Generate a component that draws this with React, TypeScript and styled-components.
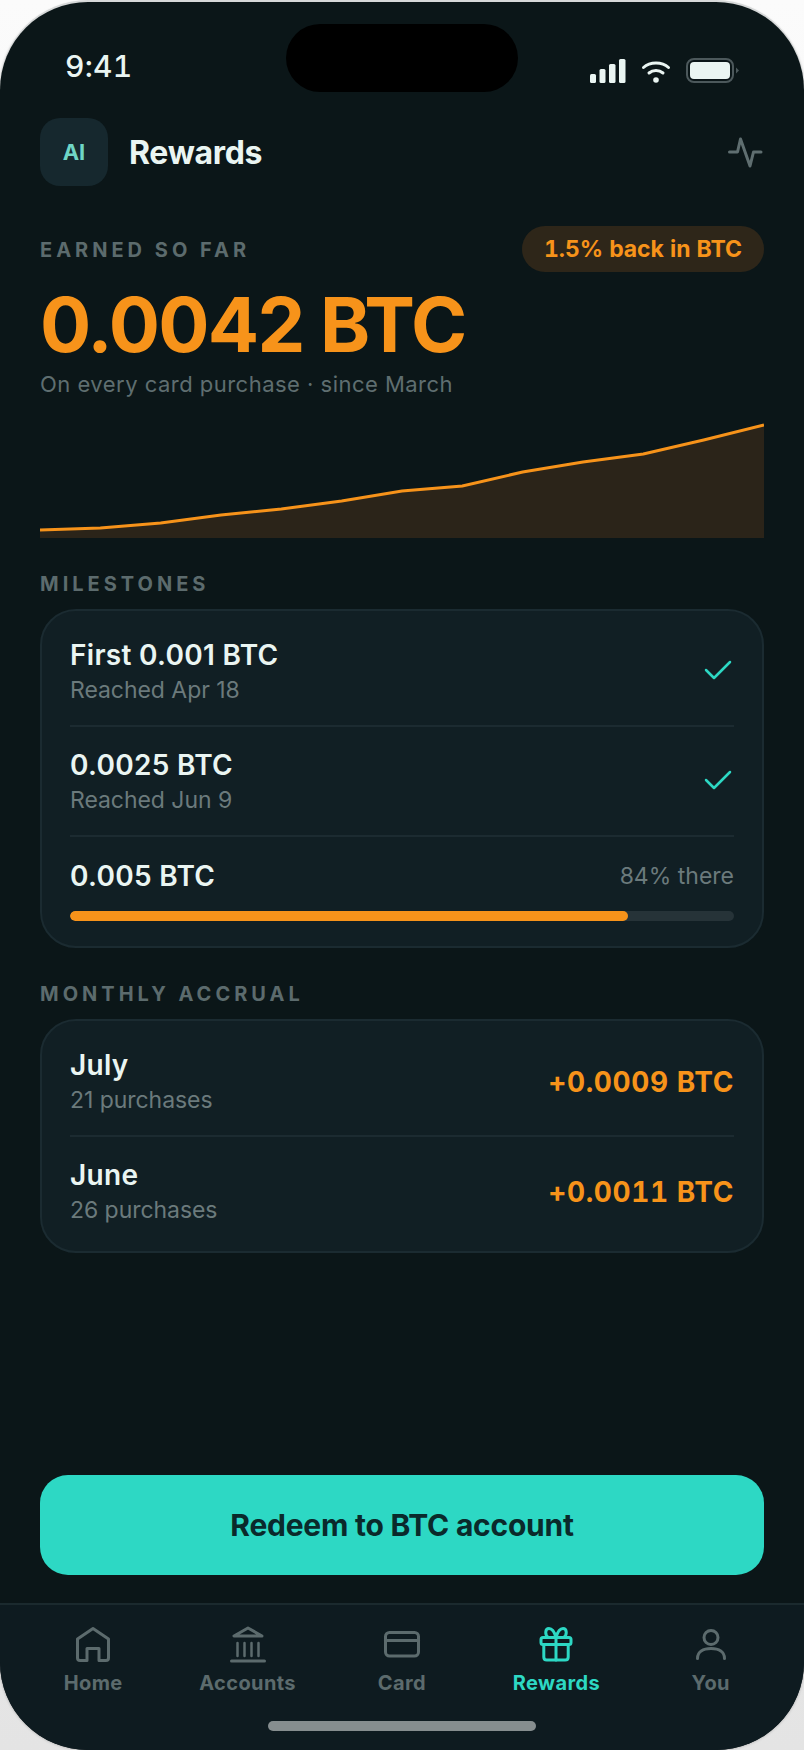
import styled, { createGlobalStyle } from "styled-components";

const ORANGE = "#f7931a";
const TEAL = "#2dd8c4";

const GlobalStyle = createGlobalStyle`
  html, body { margin: 0; padding: 0; }
  body {
    width: 804px;
    height: 1750px;
    overflow: hidden;
    background: linear-gradient(#fbfbfb, #e4e4e4);
    font-family: Inter, "Liberation Sans", sans-serif;
  }
`;

const Phone = styled.div`
  position: relative;
  margin-top: 2px;
  width: 804px;
  height: 1748px;
  display: flex;
  flex-direction: column;
  overflow: hidden;
  border-radius: 88px;
  background: #0b1618;
  box-shadow: 0 -2px 0 0 #d6d8d8, 0 0 3px rgba(0, 0, 0, 0.3);
  color: #eaf5f2;
`;

const Island = styled.div`
  position: absolute;
  top: 22px;
  left: 286px;
  width: 232px;
  height: 68px;
  border-radius: 34px;
  background: #000;
`;

const StatusBar = styled.div`
  height: 116px;
  flex: none;
  box-sizing: border-box;
  padding: 46px 64px 0 65px;
  display: flex;
  justify-content: space-between;
  align-items: flex-start;
`;

const Clock = styled.span`
  font-size: 30px;
  line-height: 36px;
  font-weight: 500;
  letter-spacing: 0.3px;
  font-variant-numeric: tabular-nums;
`;

const StatusIcons = styled.div`
  display: flex;
  align-items: center;
  gap: 15px;
  margin-top: 10px;
`;

const Content = styled.div`
  flex: 1;
  display: flex;
  flex-direction: column;
  padding: 0 40px;
`;

const Header = styled.div`
  display: flex;
  align-items: center;
  gap: 21px;
  height: 68px;
`;

const Badge = styled.div`
  width: 68px;
  height: 68px;
  border-radius: 20px;
  background: #16282e;
  color: #6fd6c6;
  display: flex;
  align-items: center;
  justify-content: center;
  font-size: 22px;
  font-weight: 700;
`;

const Title = styled.h1`
  flex: 1;
  margin: 0;
  font-size: 32px;
  font-weight: 700;
  letter-spacing: -0.3px;
`;

const HeroTop = styled.div`
  display: flex;
  align-items: center;
  justify-content: space-between;
  margin-top: 40px;
`;

const SectionLabel = styled.div`
  font-size: 20px;
  line-height: 24px;
  font-weight: 700;
  letter-spacing: 4px;
  color: #5c6b6d;
`;

const HeroLabel = styled(SectionLabel)`
  padding-top: 2px;
`;

const Pill = styled.div`
  height: 46px;
  padding: 0 22px;
  border-radius: 23px;
  background: #2e2619;
  color: ${ORANGE};
  font-size: 23px;
  font-weight: 700;
  font-variant-numeric: tabular-nums;
  letter-spacing: -0.05px;
  display: flex;
  align-items: center;
`;

const Amount = styled.div`
  margin-top: 12px;
  font-size: 76px;
  line-height: 80px;
  font-weight: 700;
  letter-spacing: -1.7px;
  color: ${ORANGE};
`;

const Sub = styled.div`
  margin-top: 5px;
  font-size: 22px;
  line-height: 30px;
  color: #5f6e70;
  letter-spacing: 0.48px;
`;

const Chart = styled.svg`
  display: block;
  margin-top: 23px;
  width: 724px;
  height: 116px;
  flex: none;
`;

const BlockLabel = styled(SectionLabel)`
  margin-top: 34px;
  margin-bottom: 13px;
`;

const Card = styled.div`
  border: 2px solid #1b2b31;
  border-radius: 36px;
  background: #111f24;
  padding: 6px 28px;
`;

const Row = styled.div<{ $last?: boolean }>`
  display: flex;
  align-items: center;
  justify-content: space-between;
  height: 108px;
  box-sizing: content-box;
  border-bottom: ${({ $last }) => ($last ? "none" : "2px solid #1c2b31")};
`;

const RowText = styled.div`
  display: flex;
  flex-direction: column;
  gap: 3px;
  padding-top: 1px;
`;

const RowTitle = styled.div`
  font-size: 28px;
  line-height: 34px;
  font-weight: 600;
  letter-spacing: 0.3px;
`;

const RowSub = styled.div`
  font-size: 23px;
  line-height: 30px;
  color: #6b7a7c;
  letter-spacing: -0.05px;
`;

const ProgressRow = styled.div`
  padding: 22px 0 19px;
`;

const ProgressHead = styled.div`
  display: flex;
  align-items: center;
  justify-content: space-between;
`;

const ProgressNote = styled.div`
  font-size: 23px;
  color: #6b7a7c;
`;

const Track = styled.div`
  margin-top: 18px;
  height: 10px;
  border-radius: 5px;
  background: #263338;
  overflow: hidden;
`;

const Fill = styled.div`
  height: 100%;
  border-radius: 5px;
  background: ${ORANGE};
`;

const Value = styled.div`
  padding-top: 2px;
  font-size: 28px;
  font-weight: 700;
  font-variant-numeric: tabular-nums;
  letter-spacing: 0.6px;
  color: ${ORANGE};
`;

const Redeem = styled.button`
  margin-top: auto;
  margin-bottom: 28px;
  width: 724px;
  height: 100px;
  flex: none;
  border: none;
  border-radius: 28px;
  background: ${TEAL};
  color: #0a2a2b;
  font-family: inherit;
  font-size: 30px;
  font-weight: 700;
  letter-spacing: -0.25px;
`;

const TabBar = styled.div`
  position: relative;
  flex: none;
  height: 147px;
  box-sizing: border-box;
  border-top: 2px solid #1b2a2e;
  background: #0e1b20;
  display: grid;
  grid-template-columns: repeat(5, 1fr);
  padding: 20px 16px 0;
`;

const Tab = styled.div<{ $active?: boolean }>`
  display: flex;
  flex-direction: column;
  align-items: center;
  gap: 6px;
  font-size: 20px;
  line-height: 24px;
  font-weight: 700;
  letter-spacing: 0.4px;
  color: ${({ $active }) => ($active ? TEAL : "#5c6b6d")};
`;

const TabIcon = styled.svg`
  display: block;
  width: 40px;
  height: 40px;
  fill: none;
  stroke: currentColor;
  stroke-width: 3;
  stroke-linecap: round;
  stroke-linejoin: round;
`;

const HomeBar = styled.div`
  position: absolute;
  left: 268px;
  bottom: 19px;
  width: 268px;
  height: 10px;
  border-radius: 5px;
  background: #868e8f;
`;

const CheckSvg = styled.svg`
  margin-right: 2px;
`;

const SignalIcon = () => (
  <svg width="36" height="24" viewBox="0 0 36 24" fill="#eaf5f2">
    <rect x="0" y="15" width="6" height="9" rx="1.5" />
    <rect x="9.5" y="10" width="6" height="14" rx="1.5" />
    <rect x="19" y="5" width="6.5" height="19" rx="1.5" />
    <rect x="29" y="0" width="6.5" height="24" rx="1.5" />
  </svg>
);

const WifiIcon = () => (
  <svg width="30" height="24" viewBox="0 0 30 24" fill="none" stroke="#eaf5f2" strokeWidth="3" strokeLinecap="round">
    <path d="M2.500 8.500C9 2.500 21 2.500 27.500 8.500" />
    <path d="M8 14C12 10.500 18 10.500 22 14" />
    <circle cx="15" cy="21" r="2.800" fill="#eaf5f2" stroke="none" />
  </svg>
);

const BatteryIcon = () => (
  <svg width="54" height="26" viewBox="0 0 54 26" fill="none">
    <rect x="1" y="1" width="46" height="23" rx="7" stroke="#4c585b" strokeWidth="2" />
    <rect x="4" y="4" width="40" height="17" rx="4" fill="#eaf5f2" />
    <path d="M50 9.500 L53 12.500 L50 15.500Z" fill="#4c585b" />
  </svg>
);

const PulseIcon = () => (
  <svg width="36" height="32" viewBox="0 0 36 32" fill="none" stroke="#5f6e70" strokeWidth="3" strokeLinecap="round" strokeLinejoin="round">
    <path d="M1.500 16H9.500L12.500 3L22 30L25.500 16H33" />
  </svg>
);

const CheckIcon = () => (
  <CheckSvg width="28" height="22" viewBox="0 0 28 22" fill="none" stroke={TEAL} strokeWidth="2.500" strokeLinecap="round" strokeLinejoin="round">
    <path d="M2 10L10 18L26 2" />
  </CheckSvg>
);

const points = [530, 528, 523, 515, 509, 501, 491, 486, 472, 462, 454, 440, 425];
const CHART_TOP = 422;
const linePath = points
  .map((y, i) => `${i === 0 ? "M" : "L"}${(i * 724) / 12} ${y - CHART_TOP}`)
  .join(" ");

const tabs = [
  {
    label: "Home",
    icon: (
      <path d="M4.500 14L20 3.500L35.500 14V33Q35.500 35.500 33 35.500H26V23.500H14V35.500H7Q4.500 35.500 4.500 33Z" />
    ),
  },
  {
    label: "Accounts",
    icon: (
      <>
        <path d="M6 11H34L20 3Z" />
        <path d="M3.500 36H36.500" />
        <path d="M9.500 18V31M16.500 18V31M23.500 18V31M30.500 18V31" strokeWidth="2.500" />
      </>
    ),
  },
  {
    label: "Card",
    icon: (
      <>
        <rect x="3.500" y="7.500" width="33" height="23.500" rx="4" />
        <path d="M3.500 15.500H36.500" />
      </>
    ),
  },
  {
    label: "Rewards",
    active: true,
    icon: (
      <>
        <rect x="5" y="12.500" width="30" height="7" rx="2" />
        <path d="M7.800 19.500V32C7.800 33.800 9 35 10.800 35H29.200C31 35 32.200 33.800 32.200 32V19.500" />
        <path d="M20 12.500V35" />
        <path d="M20 12.500C18.500 7 16 3.500 13 3.500C9 3.500 8.500 10 12.500 12.500M20 12.500C21.500 7 24 3.500 27 3.500C31 3.500 31.500 10 27.500 12.500" />
      </>
    ),
  },
  {
    label: "You",
    icon: (
      <>
        <circle cx="20" cy="12.500" r="7" />
        <path d="M6.500 33.500C6.500 27 12 23.500 20 23.500S33.500 27 33.500 33.500" />
      </>
    ),
  },
];

export default function App() {
  return (
    <>
      <GlobalStyle />
      <Phone>
        <Island />
        <StatusBar>
          <Clock>9:41</Clock>
          <StatusIcons>
            <SignalIcon />
            <WifiIcon />
            <BatteryIcon />
          </StatusIcons>
        </StatusBar>
        <Content>
          <Header>
            <Badge>AI</Badge>
            <Title>Rewards</Title>
            <PulseIcon />
          </Header>
          <HeroTop>
            <HeroLabel>EARNED SO FAR</HeroLabel>
            <Pill>1.5% back in BTC</Pill>
          </HeroTop>
          <Amount>0.0042 BTC</Amount>
          <Sub>On every card purchase · since March</Sub>
          <Chart viewBox="0 0 724 116">
            <path d={`${linePath} L724 116 L0 116 Z`} fill="#2b2419" />
            <path d={linePath} fill="none" stroke={ORANGE} strokeWidth="3" />
          </Chart>
          <BlockLabel>MILESTONES</BlockLabel>
          <Card>
            <Row>
              <RowText>
                <RowTitle>First 0.001 BTC</RowTitle>
                <RowSub>Reached Apr 18</RowSub>
              </RowText>
              <CheckIcon />
            </Row>
            <Row>
              <RowText>
                <RowTitle>0.0025 BTC</RowTitle>
                <RowSub>Reached Jun 9</RowSub>
              </RowText>
              <CheckIcon />
            </Row>
            <ProgressRow>
              <ProgressHead>
                <RowTitle>0.005 BTC</RowTitle>
                <ProgressNote>84% there</ProgressNote>
              </ProgressHead>
              <Track>
                <Fill style={{ width: "84%" }} />
              </Track>
            </ProgressRow>
          </Card>
          <BlockLabel>MONTHLY ACCRUAL</BlockLabel>
          <Card>
            <Row>
              <RowText>
                <RowTitle>July</RowTitle>
                <RowSub>21 purchases</RowSub>
              </RowText>
              <Value>+0.0009 BTC</Value>
            </Row>
            <Row $last>
              <RowText>
                <RowTitle>June</RowTitle>
                <RowSub>26 purchases</RowSub>
              </RowText>
              <Value>+0.0011 BTC</Value>
            </Row>
          </Card>
          <Redeem>Redeem to BTC account</Redeem>
        </Content>
        <TabBar>
          {tabs.map((t) => (
            <Tab key={t.label} $active={t.active}>
              <TabIcon viewBox="0 0 40 40">{t.icon}</TabIcon>
              {t.label}
            </Tab>
          ))}
          <HomeBar />
        </TabBar>
      </Phone>
    </>
  );
}
